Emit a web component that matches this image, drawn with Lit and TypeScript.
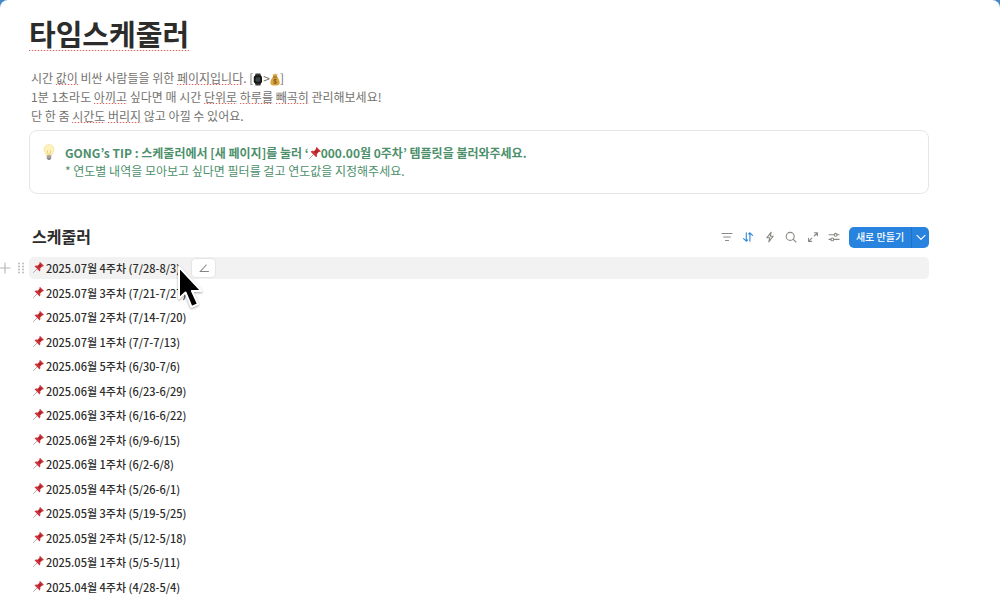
import { LitElement, html, css, svg } from "lit";
import { customElement, property } from "lit/decorators.js";

const weeks = [
  "2025.07월 4주차 (7/28-8/3)",
  "2025.07월 3주차 (7/21-7/27)",
  "2025.07월 2주차 (7/14-7/20)",
  "2025.07월 1주차 (7/7-7/13)",
  "2025.06월 5주차 (6/30-7/6)",
  "2025.06월 4주차 (6/23-6/29)",
  "2025.06월 3주차 (6/16-6/22)",
  "2025.06월 2주차 (6/9-6/15)",
  "2025.06월 1주차 (6/2-6/8)",
  "2025.05월 4주차 (5/26-6/1)",
  "2025.05월 3주차 (5/19-5/25)",
  "2025.05월 2주차 (5/12-5/18)",
  "2025.05월 1주차 (5/5-5/11)",
  "2025.04월 4주차 (4/28-5/4)",
];

const stroke = (body: unknown) => html`<svg viewBox="0 0 12 12" width="12" height="12" fill="none"
  stroke="currentColor" stroke-width="1.1" stroke-linecap="round" stroke-linejoin="round" aria-hidden="true">${body}</svg>`;

const tools = [
  { label: "필터", icon: svg`<path d="M1 2.5h10M2.7 6h6.6M4.5 9.5h3"/>` },
  { label: "정렬", active: true, icon: svg`<path d="M4.3 1.8v8.4M1.6 7.6l2.7 2.6 1.2-1.2M7.900 10.200V1.800M10.600 4.400 7.900 1.800 6.700 3"/>` },
  { label: "자동화", icon: svg`<path d="M7.2 1.2 2.8 6.8h2.9L4.8 10.8l4.4-5.6H6.3z"/>` },
  { label: "검색", icon: svg`<circle cx="5.2" cy="5.4" r="4"/><path d="m8.2 8.4 2.8 2.6"/>` },
  { label: "전체 페이지로 열기", icon: svg`<path d="M7.4 1.8h3v3M10.2 2 7.2 5M4.8 7.2l-3 3M1.6 7.4v3h3"/>` },
  { label: "설정", icon: svg`<path d="M1 3.8h5.2M9.2 3.8H11M1 8.4h1.8M5.8 8.4H11"/><circle cx="7.7" cy="3.8" r="1.4"/><circle cx="4.3" cy="8.4" r="1.4"/>` },
];

const pin = html`<svg class="pin" viewBox="1 1 22 22" role="img" aria-label="압정">
  <path d="M10.5 13.5 2 22" stroke="#9a9a9a" stroke-width="1.6" stroke-linecap="round"/>
  <path d="M4 9.6c1.8-1.6 4-1.9 6-1l4-4.2c-.5-1.4 0-2.8 1.2-3.2l7.5 7.5c-.6 1.3-1.9 1.8-3.4 1.2l-4 4.3c.9 2 .5 4.2-1 5.8z" fill="#cf3238"/>
  <path d="m10.8 9.6 4.5-4.3 3.4 3.4-4.3 4.5z" fill="#a9252d"/>
</svg>`;

const bulb = html`<svg class="bulb" viewBox="0 0 12 17" role="img" aria-label="전구">
  <path d="M6 .6a5 5 0 0 0-5 5c0 2.6 2.2 3.7 2.7 6h4.6c.5-2.3 2.7-3.4 2.7-6a5 5 0 0 0-5-5z" fill="#fff3bd" stroke="#f2dda0" stroke-width=".8"/>
  <path d="M4.2 6.2 5.2 11h1.6l1-4.8" fill="none" stroke="#e8bd57" stroke-width=".7"/>
  <path d="M3.8 11.6h4.4v2.6L7 16H5l-1.2-1.8z" fill="#8c8c8c"/>
  <path d="M3.8 13h4.4" stroke="#c4c4c4" stroke-width=".7"/>
</svg>`;

const watch = html`<svg class="watch" viewBox="0 0 10 13" role="img" aria-label="시계">
  <path d="M2.6.5h4.8l.8 3H1.8zM1.8 9.5h6.4l-.8 3H2.6z" fill="#3b3b3b"/>
  <rect x=".8" y="2.4" width="8.2" height="8.2" rx="2" fill="#161616"/>
  <rect x="2.6" y="4.2" width="4.6" height="4.6" rx=".8" fill="#3d4549"/>
</svg>`;

const money = html`<svg class="money" viewBox="0 0 10 13" role="img" aria-label="돈주머니">
  <path d="M3.4 3.6 2.6 1.2l1.7.4L5.4.5l1 1 1.3-.3-1 2.4c2 1.6 3.1 4.3 3 6.4-.1 1.9-1.4 2.5-4.6 2.5S.5 11.9.4 10C.3 7.8 1.5 5.2 3.4 3.6z" fill="#d9a53f"/>
  <path d="M3 4h4.2" stroke="#8a5a1d" stroke-width="1"/>
  <path d="M6.6 6.8c-.8-.8-2.9-.6-2.9.5 0 1.3 3 .8 3 2.1 0 1.1-2.2 1.2-3.2.4M5.1 5.8v5.4" fill="none" stroke="#7a4d16" stroke-width=".8"/>
</svg>`;

@customElement("week-row")
class WeekRow extends LitElement {
  @property() label = "";
  @property({ type: Boolean, reflect: true }) active = false;

  static styles = css`
    :host { display: flex; align-items: center; position: relative; }
    .row {
      flex: 1; display: flex; align-items: center; gap: 2px;
      height: 22px; padding-left: 4px; border-radius: 5px;
    }
    :host([active]) .row { background: #f2f2f2; }
    .pin { width: 11px; height: 11px; flex: none; padding-bottom: 1px; }
    .name { color: #2c2c2b; font-weight: 500; text-decoration: none; white-space: nowrap; }
    button {
      display: flex; align-items: center; justify-content: center;
      border: 0; padding: 0; background: none; color: #b4b4b2; font: inherit;
    }
    .edit {
      width: 23px; height: 18px; margin-left: 10px; border-radius: 4px;
      background: #fff; color: #858585; box-shadow: 0 0 1px 1px #e4e4e4;
    }
    .handles { position: absolute; right: 100%; display: flex; gap: 5px; padding-right: 3px; }
  `;

  render() {
    return html`
      ${this.active
        ? html`<div class="handles">
            <button aria-label="추가">${stroke(svg`<path d="M6 1v10M1 6h10"/>`)}</button>
            <button aria-label="이동">
              <svg viewBox="0 0 10 12" width="10" height="12" fill="currentColor" aria-hidden="true">
                ${[1.5, 4.5, 7.5, 10.5].map((y) => svg`<circle cx="3" cy=${y} r=".9"/><circle cx="7" cy=${y} r=".9"/>`)}
              </svg>
            </button>
          </div>`
        : ""}
      <div class="row">
        ${pin}<a class="name" href="#">${this.label}</a>
        ${this.active
          ? html`<button class="edit" aria-label="이름 편집">${stroke(svg`<path d="M2 9.5h8.5M2.2 9.5l6-6.5"/>`)}</button>`
          : ""}
      </div>
    `;
  }
}

@customElement("app-root")
class AppRoot extends LitElement {
  static styles = css`
    :host {
      display: block; min-height: 100vh; background: #4588c8; color: #2c2c2b;
      font: 11px/18px "Noto Sans CJK KR", sans-serif;
    }
    .page {
      box-sizing: border-box; min-height: 100vh; padding: 13px 71px 0 29px;
      background: #fff; border-radius: 8px 8px 0 0;
    }
    h1, h2, p, ul { margin: 0; padding: 0; }
    h1 { font-size: 29px; line-height: 40px; font-weight: 700; }
    .typo {
      background: linear-gradient(90deg, #d9635f 50%, #f7dddc 50%) 0 92% / 3px 1px repeat-x;
    }
    .intro { margin-top: 15px; padding-left: 2px; font-size: 12px; line-height: 19px; color: #73726e; }
    .watch, .money { width: 10px; height: 13px; vertical-align: -3px; }
    .callout {
      display: flex; gap: 10px; margin-top: 5px; padding: 13px;
      border: 1px solid #e6e6e4; border-radius: 8px; font-size: 12px; color: #4c8f6b;
    }
    .bulb { width: 12px; height: 17px; flex: none; }
    .tip { font-weight: 700; }
    .pin { width: 12px; height: 12px; vertical-align: -1px; }
    .bar { display: flex; align-items: center; margin-top: 31px; padding-left: 3px; }
    h2 { flex: 1; padding-bottom: 2px; font-size: 16px; line-height: 22px; font-weight: 600; }
    button {
      display: flex; align-items: center; justify-content: center;
      border: 0; padding: 0; background: none; font: inherit; color: #8a8985;
    }
    .tools { display: grid; grid-template-columns: repeat(6, 1fr); width: 129px; margin-right: 4px; }
    .tools .on { color: #2f86d6; }
    .new { display: flex; height: 21px; border-radius: 5px; overflow: hidden; background: #2783de; }
    .new button { color: #fff; font-size: 10px; font-weight: 500; }
    .create { width: 62px; }
    .more { width: 18px; border-left: 1px solid #2272c4; }
    ul { display: grid; grid-auto-rows: 24px 25px; margin-top: 7px; list-style: none; }
    li { display: grid; position: relative; }
    .cursor {
      position: absolute; left: 147px; top: 8px; width: 28px; height: 46px; z-index: 1;
      pointer-events: none; filter: drop-shadow(0 1px 1px #0005);
    }
  `;

  render() {
    const t = (s: string) => html`<span class="typo">${s}</span>`;
    return html`
      <main class="page">
        <h1>${t("타임스케줄러")}</h1>
        <div class="intro">
          <p>시간 ${t("값이")} 비싼 사람들을 위한 ${t("페이지입니다")}. [${watch}>${money}]</p>
          <p>1분 1초라도 ${t("아끼고")} 싶다면 매 시간 ${t("단위로")} ${t("하루를")} ${t("빼곡히")} 관리해보세요!</p>
          <p>단 한 줌 ${t("시간도")} ${t("버리지")} 않고 아낄 수 있어요.</p>
        </div>
        <aside class="callout">
          ${bulb}
          <div>
            <p class="tip">GONG’s TIP : 스케줄러에서 [새 페이지]를 눌러 ‘${pin}000.00월 0주차’ 템플릿을 불러와주세요.</p>
            <p>* 연도별 내역을 모아보고 싶다면 필터를 걸고 연도값을 지정해주세요.</p>
          </div>
        </aside>
        <section>
          <div class="bar">
            <h2>스케줄러</h2>
            <div class="tools">
              ${tools.map((x) => html`<button class=${x.active ? "on" : ""} aria-label=${x.label}>${stroke(x.icon)}</button>`)}
            </div>
            <div class="new">
              <button class="create">새로 만들기</button>
              <button class="more" aria-label="템플릿 선택">${stroke(svg`<path d="m2 4.3 4 4 4-4"/>`)}</button>
            </div>
          </div>
          <ul>
            ${weeks.map((w, i) => html`<li>
              <week-row .label=${w} ?active=${i === 0}></week-row>
              ${i === 0
                ? html`<svg class="cursor" viewBox="0 0 28 46" aria-hidden="true">
                    <path d="M3 3v31.5l6.5-6 6 14.5 6.5-2.8-6-13.2h9.5z" fill="#000" stroke="#fff" stroke-width="2" stroke-linejoin="round"/>
                  </svg>`
                : ""}
            </li>`)}
          </ul>
        </section>
      </main>
    `;
  }
}
